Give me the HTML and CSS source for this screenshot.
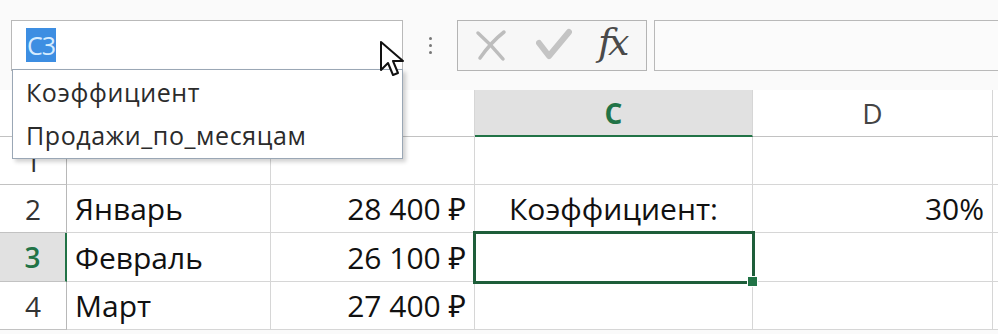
FILE: index.html
```html
<!DOCTYPE html>
<html lang="ru">
<head>
  <meta charset="UTF-8" />
  <title>Имя ячейки</title>
  <link rel="stylesheet" href="styles.css">
</head>
<body>
  <!-- Formula bar -->
  <div class="formula-bar">
    <div class="name-box"><span class="name-sel">C3</span></div>
    <div class="grip"><i></i><i></i><i></i></div>
    <div class="fx-buttons">
      <svg class="ico" width="34" height="36" viewBox="0 0 34 36">
        <path d="M4 6 C12 13 20 21 29 32" stroke="#bdbdbd" stroke-width="3.5" fill="none" stroke-linecap="round"/>
        <path d="M30 5 C21 12 13 21 6 31" stroke="#bdbdbd" stroke-width="3.5" fill="none" stroke-linecap="round"/>
      </svg>
      <svg class="ico" width="36" height="34" viewBox="0 0 36 34">
        <path d="M3 15 L13 28 L33 4" stroke="#c4c4c4" stroke-width="6" fill="none" stroke-linejoin="round" stroke-linecap="round"/>
      </svg>
      <span class="fx">fx</span>
    </div>
    <div class="formula-input"></div>
  </div>

  <!-- Name box dropdown -->
  <ul class="name-list">
    <li>Коэффициент</li>
    <li>Продажи_по_месяцам</li>
  </ul>

  <svg class="cursor" width="28" height="40" viewBox="0 0 28 40">
    <path d="M2 2 L2 30 L9 23 L14 35 L19 33 L14 21 L24 21 Z" fill="#fff" stroke="#111" stroke-width="2" stroke-linejoin="round"/>
  </svg>

  <!-- Sheet (A and B headers sit under the dropdown) -->
  <div class="sheet">
    <div class="hd corner"></div>
    <div class="hd col"></div>
    <div class="hd col"></div>
    <div class="hd col sel-col">C</div>
    <div class="hd col">D</div>
    <div class="hd col rest"></div>

    <div class="hd row">1</div>
    <div class="cell"></div>
    <div class="cell"></div>
    <div class="cell"></div>
    <div class="cell"></div>
    <div class="cell rest"></div>

    <div class="hd row">2</div>
    <div class="cell">Январь</div>
    <div class="cell num">28 400 ₽</div>
    <div class="cell center">Коэффициент:</div>
    <div class="cell num">30%</div>
    <div class="cell rest"></div>

    <div class="hd row sel-row">3</div>
    <div class="cell">Февраль</div>
    <div class="cell num">26 100 ₽</div>
    <div class="cell active"><span class="handle"></span></div>
    <div class="cell"></div>
    <div class="cell rest"></div>

    <div class="hd row">4</div>
    <div class="cell">Март</div>
    <div class="cell num">27 400 ₽</div>
    <div class="cell"></div>
    <div class="cell"></div>
    <div class="cell rest"></div>
  </div>
</body>
</html>
```

FILE: styles.css
```css
body {
  margin: 0;
  width: 998px;
  height: 334px;
  overflow: hidden;
  background: #fafafa;
  font-family: 'Open Sans', 'Noto Sans', sans-serif;
  color: #1a1a1a;
  position: relative;
}

/* formula bar */
.formula-bar {
  display: flex;
  align-items: center;
  height: 90px;
  padding-left: 11px;
  box-sizing: border-box;
}
.name-box {
  width: 392px;
  height: 51px;
  box-sizing: border-box;
  border: 1px solid #b9b9b9;
  background: #fff;
  display: flex;
  align-items: center;
  padding-left: 14px;
}
.name-sel {
  background: #3d8ee2;
  color: #d6ecff;
  font-size: 25px;
  line-height: 34px;
  padding: 0 1px;
  letter-spacing: -1px;
}
.grip {
  width: 54px;
  display: flex;
  flex-direction: column;
  align-items: center;
  gap: 4px;
}
.grip i {
  width: 3px;
  height: 3px;
  background: #777;
  border-radius: 50%;
}
.fx-buttons {
  width: 190px;
  height: 51px;
  box-sizing: border-box;
  border: 1px solid #b4b4b4;
  background: #f7f7f7;
  display: flex;
  align-items: center;
  padding-left: 16px;
  gap: 28px;
}
.fx {
  font-family: 'DejaVu Serif', 'Liberation Serif', serif;
  font-style: italic;
  font-size: 38px;
  line-height: 1;
  color: #4a4a4a;
  letter-spacing: -4px;
  margin-left: -2px;
  margin-top: -6px;
}
.formula-input {
  flex: 1;
  height: 51px;
  margin-left: 7px;
  box-sizing: border-box;
  border: 1px solid #b9b9b9;
  border-right: none;
  background: #fbfbfb;
}

/* name box dropdown */
.name-list {
  position: absolute;
  left: 12px;
  top: 69px;
  width: 389px;
  margin: 0;
  padding: 1px 0 1px;
  list-style: none;
  background: #fff;
  border: 1px solid #9aa7b5;
  box-shadow: 3px 3px 4px rgba(0, 0, 0, 0.18);
  z-index: 2;
}
.name-list li {
  font-size: 25px;
  line-height: 43px;
  height: 43px;
  padding-left: 13px;
  letter-spacing: 0.6px;
  color: #2b2b2b;
}

.cursor {
  position: absolute;
  left: 379px;
  top: 40px;
  z-index: 3;
}

/* sheet */
.sheet {
  display: grid;
  grid-template-columns: 67px 204px 204px 278px 240px 1fr;
  grid-template-rows: 47px 48px 48px 49px 48px;
  background: #fff;
}
.hd, .cell {
  border-right: 1px solid #d6d6d6;
  border-bottom: 1px solid #d6d6d6;
  display: flex;
  align-items: center;
  font-size: 30px;
  white-space: nowrap;
}
.hd {
  justify-content: center;
  color: #444;
  border-bottom-color: #c2c2c2;
}
.hd.col {
  font-size: 28px;
}
.hd.row {
  border-right-color: #b8b8b8;
  color: #333;
  font-size: 28px;
}
.hd.sel-col {
  background: #e1e1e1;
  color: #217346;
  font-weight: 700;
  border-bottom: 2px solid #217346;
}
.hd.sel-row {
  background: #e1e1e1;
  color: #217346;
  font-weight: 600;
  border-right: 2px solid #217346;
}
.cell {
  padding: 0 8px;
  color: #111;
}
.cell.num {
  justify-content: flex-end;
}
.cell.center {
  justify-content: center;
}
.rest {
  border-right: none;
}
.cell.active {
  position: relative;
  outline: 3px solid #1e5e3a;
  outline-offset: -1px;
}
.handle {
  position: absolute;
  right: -6px;
  bottom: -6px;
  width: 9px;
  height: 9px;
  background: #217346;
  border: 1px solid #fff;
}
```
